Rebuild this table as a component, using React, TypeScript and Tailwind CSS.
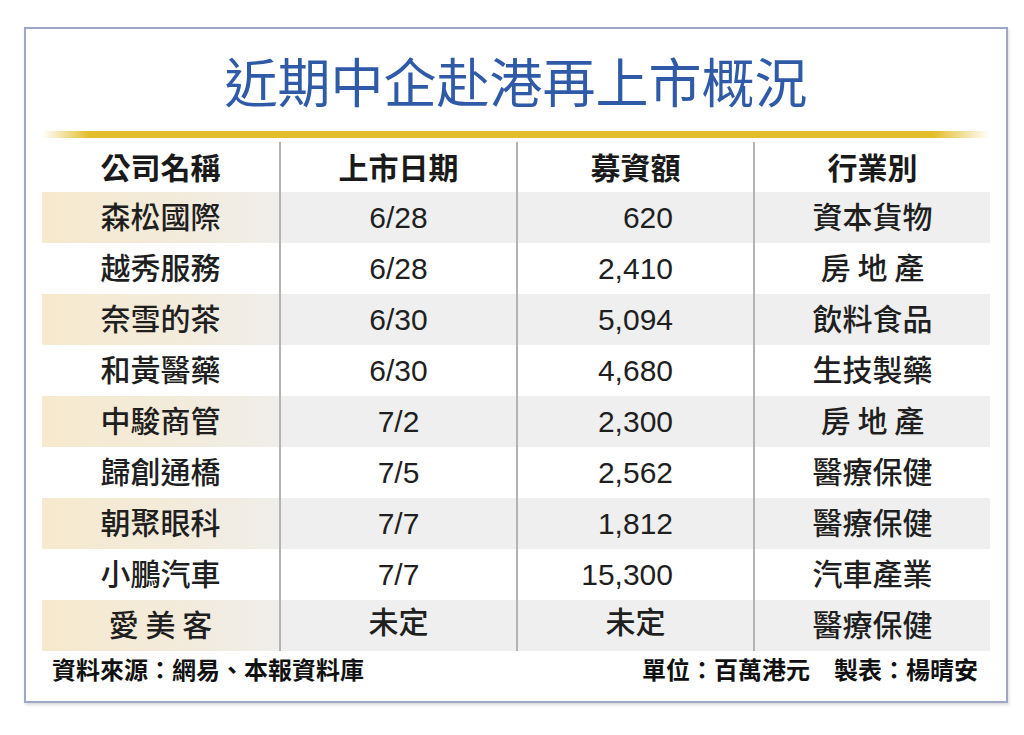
const rows = [
  { name: "森松國際", date: "6/28", amount: "620", industry: "資本貨物" },
  { name: "越秀服務", date: "6/28", amount: "2,410", industry: "房 地 產" },
  { name: "奈雪的茶", date: "6/30", amount: "5,094", industry: "飲料食品" },
  { name: "和黃醫藥", date: "6/30", amount: "4,680", industry: "生技製藥" },
  { name: "中駿商管", date: "7/2", amount: "2,300", industry: "房 地 產" },
  { name: "歸創通橋", date: "7/5", amount: "2,562", industry: "醫療保健" },
  { name: "朝聚眼科", date: "7/7", amount: "1,812", industry: "醫療保健" },
  { name: "小鵬汽車", date: "7/7", amount: "15,300", industry: "汽車產業" },
  { name: "愛 美 客", date: "未定", amount: "未定", industry: "醫療保健" },
];

const sep = "border-l-2 border-[#b3b3b3]";

export default function App() {
  return (
    <div className="min-h-[735px] w-[1024px] bg-white pt-[27px] pl-[24px] font-['Liberation_Sans','Noto_Sans_CJK_TC',sans-serif] text-[#1f1f1f]">
      <div className="flex h-[676px] w-[984px] flex-col border-2 border-[#9da8c9] bg-white px-4 shadow-[1px_2px_3px_rgba(0,0,0,0.15)]">
        <div className="flex h-[102px] items-center justify-center">
          <h1 className="font-['Noto_Sans_CJK_TC',sans-serif] text-[53px] leading-none font-normal text-[#2f5aa8]">
            近期中企赴港再上市概況
          </h1>
        </div>
        <div className="h-[7px] bg-[linear-gradient(to_right,rgba(230,192,44,0)_0%,#e4bd2a_5%,#e4bd2a_94%,rgba(230,192,44,0)_100%)]" />

        <div className="mt-[4px]">
          <div className="grid h-[50px] grid-cols-4 items-stretch font-['Noto_Sans_CJK_TC',sans-serif] text-[30px] leading-none font-bold text-[#1a1a1a]">
            <div className="flex items-center justify-center pb-[3px]">公司名稱</div>
            <div className={`flex items-center justify-center pb-[3px] ${sep}`}>上市日期</div>
            <div className={`flex items-center justify-center pb-[3px] ${sep}`}>募資額</div>
            <div className={`flex items-center justify-center pb-[3px] ${sep}`}>行業別</div>
          </div>

          {rows.map((r, i) => {
            const shaded = i % 2 === 0;
            const cjkDate = r.date === "未定";
            return (
              <div
                key={i}
                className={`grid h-[51px] grid-cols-4 text-[30px] leading-none ${shaded ? "bg-[#efefef]" : "bg-white"}`}
              >
                <div
                  className={`flex items-center justify-center pb-[5px] font-['Noto_Sans_CJK_TC',sans-serif] font-medium ${shaded ? "bg-[linear-gradient(to_right,#f6e9cd,#f3ebda_55%,#efeeea)]" : ""}`}
                >
                  {r.name}
                </div>
                <div className={`flex items-center justify-center ${cjkDate ? "pb-[5px] font-medium" : ""} ${sep}`}>
                  {r.date}
                </div>
                <div
                  className={`flex items-center ${cjkDate ? "justify-center pb-[5px] font-medium" : "justify-end pr-[80px]"} ${sep}`}
                >
                  {r.amount}
                </div>
                <div
                  className={`flex items-center justify-center pb-[5px] font-['Noto_Sans_CJK_TC',sans-serif] font-medium ${sep}`}
                >
                  {r.industry}
                </div>
              </div>
            );
          })}
        </div>

        <div className="flex h-[35px] items-center justify-between pr-[12px] pl-[10px] font-['Noto_Sans_CJK_TC',sans-serif] text-[24px] leading-none font-bold text-[#111]">
          <span>資料來源：網易、本報資料庫</span>
          <span>單位：百萬港元　製表：楊晴安</span>
        </div>
      </div>
    </div>
  );
}
